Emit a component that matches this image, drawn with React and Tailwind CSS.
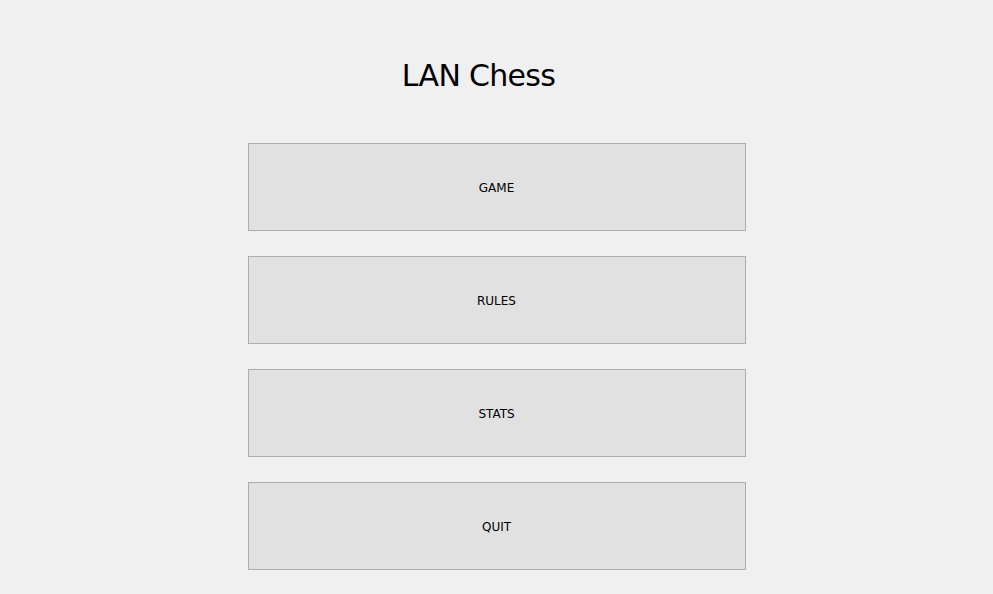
export default function App() {
  const items = ['GAME', 'RULES', 'STATS', 'QUIT']
  return (
    <div
      className="w-[993px] h-[594px] bg-[#f0f0f0] flex flex-col items-center overflow-hidden"
      style={{ fontFamily: '"DejaVu Sans", Tahoma, sans-serif' }}
    >
      {/* title sits a little left of the button column */}
      <div className="pt-[57px] h-[143px] pr-[36px]">
        <h1 className="text-[30px] leading-[38px] text-black tracking-[-0.7px]">LAN Chess</h1>
      </div>
      <div className="flex flex-col gap-[25px]">
        {items.map((label) => (
          <button
            key={label}
            className="w-[498px] h-[88px] bg-[#e1e1e1] border border-[#adadad] text-[12px] text-black flex items-center justify-center pt-[2px]"
          >
            {label}
          </button>
        ))}
      </div>
    </div>
  )
}
